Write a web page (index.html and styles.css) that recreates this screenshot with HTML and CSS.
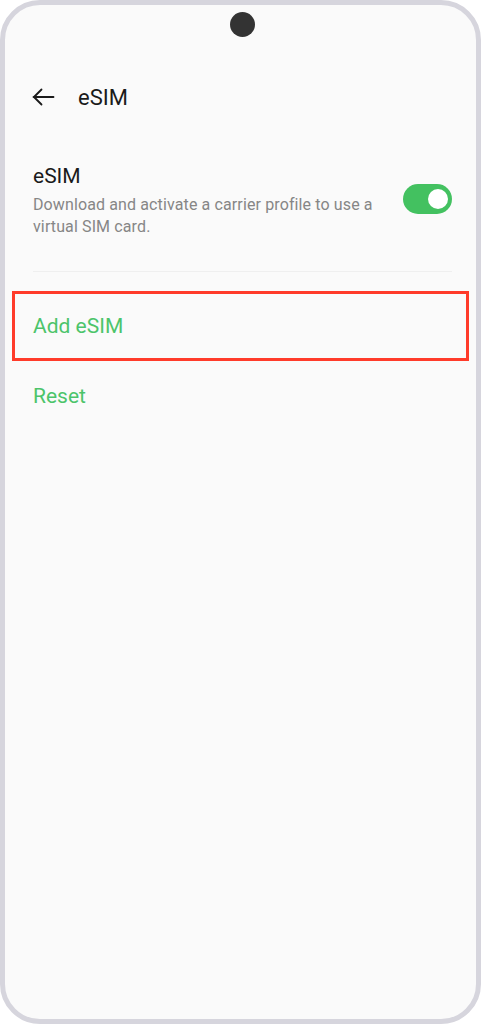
FILE: index.html
```html
<!DOCTYPE html>
<html>
<head>
<meta charset="utf-8">
<link rel="stylesheet" href="styles.css">
</head>
<body>
<div class="phone">
  <div class="camera"></div>
  <div class="appbar">
    <svg class="back" width="24" height="24" viewBox="0 0 24 24"><path d="M22.5 12H2.5M10.5 4.5 3 12l7.5 7.5" fill="none" stroke="#1a1a1a" stroke-width="1.8" stroke-linecap="round" stroke-linejoin="round"/></svg>
    <span class="title">eSIM</span>
  </div>
  <div class="switch-row">
    <div class="switch-text">
      <div class="label">eSIM</div>
      <div class="desc">Download and activate a carrier profile to use a virtual SIM card.</div>
    </div>
    <div class="toggle"><div class="knob"></div></div>
  </div>
  <div class="divider"></div>
  <div class="action highlighted">Add eSIM</div>
  <div class="action">Reset</div>
</div>
</body>
</html>
```
FILE: styles.css
```css
html, body {
  margin: 0;
  padding: 0;
  background: #ffffff;
}
body {
  font-family: Roboto, "Noto Sans", sans-serif;
  width: 481px;
  height: 1024px;
  overflow: hidden;
}
.phone {
  box-sizing: border-box;
  width: 481px;
  height: 1024px;
  border: 5px solid #d6d5dd;
  border-radius: 40px;
  background: #fafafa;
  position: relative;
  display: flex;
  flex-direction: column;
}
.camera {
  position: absolute;
  left: 225px;
  top: 7px;
  width: 25px;
  height: 25px;
  border-radius: 50%;
  background: #333333;
}
.appbar {
  display: flex;
  align-items: center;
  height: 30px;
  margin-top: 77px;
  padding-left: 26px;
}
.back {
  display: block;
}
.title {
  margin-left: 23px;
  font-size: 22px;
  color: #1a1a1a;
}
.switch-row {
  display: flex;
  align-items: flex-start;
  margin-top: 50px;
  padding: 0 24px 0 28px;
}
.switch-text {
  flex: 1;
}
.label {
  font-size: 21px;
  color: #1a1a1a;
  line-height: 28px;
}
.desc {
  margin-top: 4px;
  font-size: 16px;
  line-height: 22px;
  letter-spacing: 0.12px;
  color: #868686;
  width: 355px;
}
.toggle {
  width: 49px;
  height: 30px;
  border-radius: 15px;
  background: #43c160;
  position: relative;
  margin-top: 22px;
}
.knob {
  position: absolute;
  right: 4px;
  top: 5px;
  width: 20px;
  height: 20px;
  border-radius: 50%;
  background: #ffffff;
}
.divider {
  height: 1px;
  background: #efefef;
  margin: 33px 24px 0 28px;
}
.action {
  height: 70px;
  display: flex;
  align-items: center;
  padding-left: 28px;
  font-size: 21px;
  color: #4cc46a;
}
.highlighted {
  box-sizing: border-box;
  margin: 19px 7px 0 7px;
  padding-left: 18px;
  border: 3px solid #ff3b2a;
}
```
